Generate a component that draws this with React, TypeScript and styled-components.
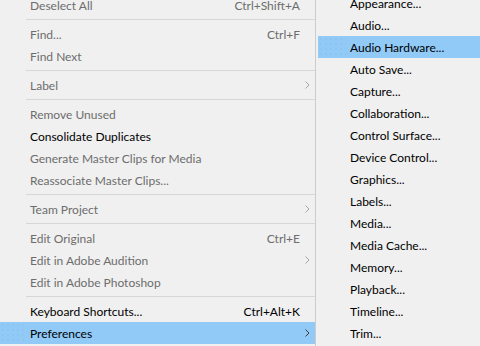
import * as React from 'react'
import styled, { createGlobalStyle } from 'styled-components'

interface Entry {
  label?: string
  shortcut?: string
  enabled?: boolean
  submenu?: boolean
  active?: boolean
  separator?: boolean
}

const mainItems: Entry[] = [
  { label: 'Deselect All', shortcut: 'Ctrl+Shift+A' },
  { separator: true },
  { label: 'Find...', shortcut: 'Ctrl+F' },
  { label: 'Find Next' },
  { separator: true },
  { label: 'Label', submenu: true },
  { separator: true },
  { label: 'Remove Unused' },
  { label: 'Consolidate Duplicates', enabled: true },
  { label: 'Generate Master Clips for Media' },
  { label: 'Reassociate Master Clips...' },
  { separator: true },
  { label: 'Team Project', submenu: true },
  { separator: true },
  { label: 'Edit Original', shortcut: 'Ctrl+E' },
  { label: 'Edit in Adobe Audition', submenu: true },
  { label: 'Edit in Adobe Photoshop' },
  { separator: true },
  { label: 'Keyboard Shortcuts...', shortcut: 'Ctrl+Alt+K', enabled: true },
  { label: 'Preferences', submenu: true, enabled: true, active: true },
]

const prefItems = [
  'Appearance...',
  'Audio...',
  'Audio Hardware...',
  'Auto Save...',
  'Capture...',
  'Collaboration...',
  'Control Surface...',
  'Device Control...',
  'Graphics...',
  'Labels...',
  'Media...',
  'Media Cache...',
  'Memory...',
  'Playback...',
  'Timeline...',
  'Trim...',
]

const Chevron: React.FC<{ enabled?: boolean }> = ({ enabled }) => (
  <svg width="5" height="8" viewBox="0 0 5 8">
    <path d="M0.5 0.5 L4 4 L0.5 7.5" fill="none" stroke={enabled ? '#3a3a3a' : '#a6a6a6'} strokeWidth="1" />
  </svg>
)

const App: React.FC = () => (
  <>
    <GlobalStyle />
    <StyledScreen>
      <StyledMainMenu>
        {mainItems.map((item, i) =>
          item.separator ? (
            <StyledSeparator key={i} />
          ) : (
            <StyledItem key={i} $enabled={item.enabled} $active={item.active}>
              <StyledGutter $width={26} $active={item.active} />
              <StyledLabel>{item.label}</StyledLabel>
              {item.shortcut && <StyledShortcut>{item.shortcut}</StyledShortcut>}
              <StyledArrowCell>{item.submenu && <Chevron enabled={item.enabled} />}</StyledArrowCell>
            </StyledItem>
          )
        )}
      </StyledMainMenu>
      <StyledSubMenu>
        {prefItems.map(label => (
          <StyledSubItem key={label} $active={label === 'Audio Hardware...'}>
            <StyledGutter $width={28} $active={label === 'Audio Hardware...'} />
            <StyledLabel>{label}</StyledLabel>
          </StyledSubItem>
        ))}
      </StyledSubMenu>
    </StyledScreen>
  </>
)

const GlobalStyle = createGlobalStyle`
  html, body {
    margin: 0;
    padding: 0;
    background: #f0f0f0;
  }
  body {
    font-family: Lato, "Open Sans", sans-serif;
    font-size: 12px;
  }
`

const StyledScreen = styled.div`
  display: flex;
  align-items: flex-start;
  width: 480px;
  height: 346px;
  overflow: hidden;
  background: #f0f0f0;
`

const StyledMainMenu = styled.div`
  flex: 0 0 315px;
  margin-top: -6px;
  padding-bottom: 2px;
  border-right: 1px solid #cccccc;
`

const StyledItem = styled.div<{ $enabled?: boolean, $active?: boolean }>`
  display: flex;
  align-items: center;
  height: 22px;
  color: ${props => props.$enabled ? '#000000' : '#6d6d6d'};
  background-color: ${props => props.$active ? '#91c9f7' : 'transparent'};
`

// faint dotted texture the highlight shows in the icon gutter
const StyledGutter = styled.div<{ $width: number, $active?: boolean }>`
  flex: 0 0 ${props => props.$width}px;
  align-self: stretch;
  margin-right: 4px;
  background-image: ${props => props.$active
    ? 'radial-gradient(circle at 1px 1px, #88bfec 0.5px, transparent 0.9px)'
    : 'none'};
  background-size: 5px 5px;
  background-position: 2px 2px;
`

const StyledLabel = styled.div`
  flex: 1 1 auto;
  white-space: nowrap;
`

const StyledShortcut = styled.div`
  flex: 0 0 auto;
  white-space: nowrap;
`

const StyledArrowCell = styled.div`
  flex: 0 0 15px;
  display: flex;
  align-items: center;
  padding-left: 5px;
  box-sizing: border-box;
`

const StyledSeparator = styled.div`
  height: 7px;
  margin-left: 26px;
  display: flex;
  align-items: center;

  &::after {
    content: '';
    flex: 1;
    height: 1px;
    background: #d7d7d7;
  }
`

const StyledSubMenu = styled.div`
  flex: 1 0 auto;
  margin-top: -8px;
  padding-left: 2px;
`

const StyledSubItem = styled.div<{ $active?: boolean }>`
  display: flex;
  align-items: center;
  height: 22px;
  color: #000000;
  background-color: ${props => props.$active ? '#91c9f7' : 'transparent'};
`

export default App
